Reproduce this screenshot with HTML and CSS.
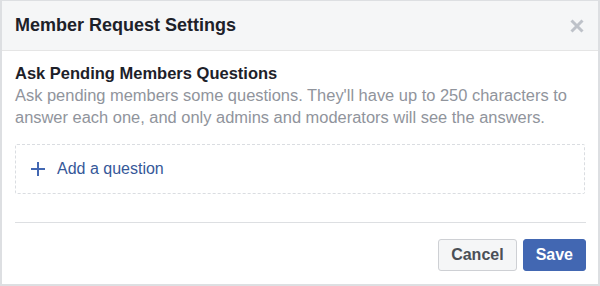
FILE: index.html
```html
<!DOCTYPE html>
<html>
<head>
    <meta charset="UTF-8">
    <meta name="viewport" content="width=device-width, initial-scale=1.0">
    <title>Member Request Settings</title>
    <link rel="stylesheet" href="styles.css">
</head>
<body>
    <div class="dialog">
        <div class="dialog-header">
            <h1>Member Request Settings</h1>
            <span class="close">
                <svg width="14" height="14" viewBox="0 0 14 14">
                    <path d="M1.5 1.5 L12.5 12.5 M12.5 1.5 L1.5 12.5" stroke="#bec2c9" stroke-width="3" stroke-linecap="butt"/>
                </svg>
            </span>
        </div>
        <div class="dialog-body">
            <h2>Ask Pending Members Questions</h2>
            <p class="hint">Ask pending members some questions. They'll have up to 250 characters to answer each one, and only admins and moderators will see the answers.</p>
            <div class="add-question">
                <svg class="plus" width="14" height="14" viewBox="0 0 14 14">
                    <path d="M7 0 V14 M0 7 H14" stroke="#4267b2" stroke-width="2"/>
                </svg>
                <span>Add a question</span>
            </div>
        </div>
        <div class="dialog-footer">
            <button class="btn btn-cancel">Cancel</button>
            <button class="btn btn-save">Save</button>
        </div>
    </div>
</body>
</html>
```

FILE: styles.css
```css
body {
    font-family: "Liberation Sans", Arial, sans-serif;
    margin: 0;
    padding: 0;
    background-color: #fff;
}
.dialog {
    width: 600px;
    height: 286px;
    box-sizing: border-box;
    border: 2px solid #dddfe2;
    border-top-width: 1px;
    background-color: #fff;
}
.dialog-header {
    height: 49px;
    display: flex;
    align-items: center;
    justify-content: space-between;
    padding: 0 14px 0 13px;
    background-color: #f5f6f7;
    border-bottom: 1px solid #e5e5e5;
}
.dialog-header h1 {
    margin: 0;
    font-size: 18px;
    font-weight: bold;
    color: #1d2129;
}
.close {
    display: flex;
}
.dialog-body {
    padding: 12px 13px 0;
}
.dialog-body h2 {
    margin: 0;
    font-size: 16.5px;
    line-height: 20px;
    font-weight: bold;
    color: #1d2129;
}
.hint {
    margin: 1px 0 0;
    font-size: 16.45px;
    line-height: 22px;
    color: #90949c;
}
.add-question {
    margin-top: 16px;
    height: 48px;
    display: flex;
    align-items: center;
    padding-left: 15px;
    border: 1px dashed #dadde1;
    border-radius: 2px;
    color: #365899;
    font-size: 16px;
}
.add-question .plus {
    margin-right: 12px;
}
.dialog-footer {
    margin: 28px 12px 0 13px;
    padding-top: 16px;
    border-top: 1px solid #dddfe2;
    display: flex;
    justify-content: flex-end;
    gap: 6px;
}
.btn {
    height: 32px;
    padding: 0 12px;
    border-radius: 3px;
    font-family: "Liberation Sans", Arial, sans-serif;
    font-size: 16px;
    font-weight: bold;
    cursor: pointer;
}
.btn-cancel {
    background-color: #f5f6f7;
    border: 1px solid #ced0d4;
    color: #4b4f56;
}
.btn-save {
    background-color: #4267b2;
    border: 1px solid #4267b2;
    color: #fff;
}
```
